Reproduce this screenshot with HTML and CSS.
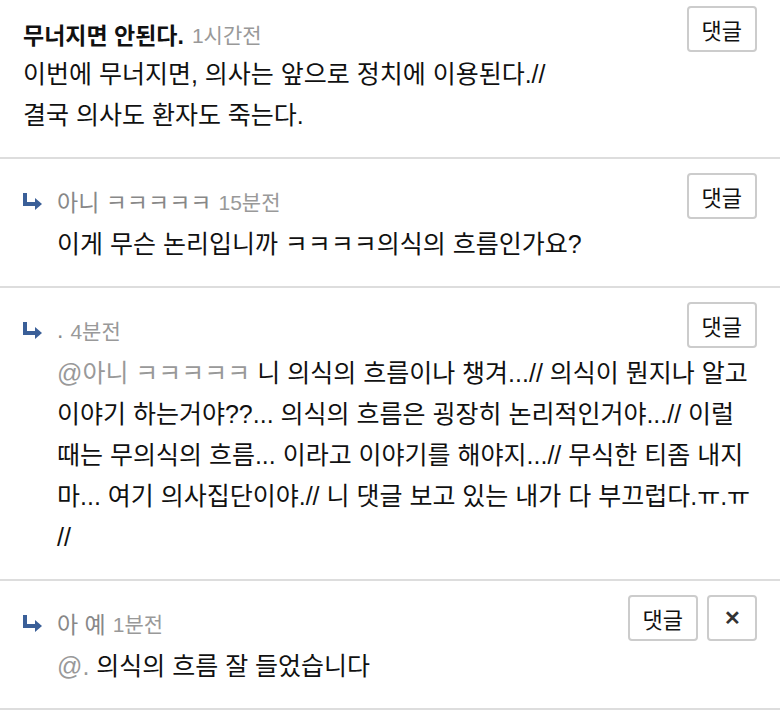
FILE: index.html
```html
<!DOCTYPE html>
<html>
<head>
  <title>댓글</title>
  <link rel="stylesheet" href="styles.css">
</head>
<body>
  <div class="comment-list">
    <div class="comment">
      <div class="comment-head">
        <div class="comment-meta">
          <span class="author-main">무너지면 안된다.</span>
          <span class="time">1시간전</span>
        </div>
        <div class="comment-actions">
          <button class="btn">댓글</button>
        </div>
      </div>
      <div class="comment-body">이번에 무너지면, 의사는 앞으로 정치에 이용된다.//<br>결국 의사도 환자도 죽는다.</div>
    </div>

    <div class="comment reply">
      <div class="comment-head">
        <div class="comment-meta">
          <svg class="reply-icon" width="20" height="18" viewBox="0 0 20 18">
            <path d="M2 1 V12 H13" fill="none" stroke="#3a5f98" stroke-width="4"/>
            <path d="M12 6 L19 12 L12 18 Z" fill="#3a5f98"/>
          </svg>
          <span class="author">아니 ㅋㅋㅋㅋㅋ</span>
          <span class="time">15분전</span>
        </div>
        <div class="comment-actions">
          <button class="btn">댓글</button>
        </div>
      </div>
      <div class="comment-body">이게 무슨 논리입니까 ㅋㅋㅋㅋ의식의 흐름인가요?</div>
    </div>

    <div class="comment reply">
      <div class="comment-head">
        <div class="comment-meta">
          <svg class="reply-icon" width="20" height="18" viewBox="0 0 20 18">
            <path d="M2 1 V12 H13" fill="none" stroke="#3a5f98" stroke-width="4"/>
            <path d="M12 6 L19 12 L12 18 Z" fill="#3a5f98"/>
          </svg>
          <span class="author">.</span>
          <span class="time">4분전</span>
        </div>
        <div class="comment-actions">
          <button class="btn">댓글</button>
        </div>
      </div>
      <div class="comment-body"><span class="mention">@아니 ㅋㅋㅋㅋㅋ</span> 니 의식의 흐름이나 챙겨...// 의식이 뭔지나 알고 이야기 하는거야??... 의식의 흐름은 굉장히 논리적인거야...// 이럴 때는 무의식의 흐름... 이라고 이야기를 해야지...// 무식한 티좀 내지 마... 여기 의사집단이야.// 니 댓글 보고 있는 내가 다 부끄럽다.ㅠ.ㅠ //</div>
    </div>

    <div class="comment reply">
      <div class="comment-head">
        <div class="comment-meta">
          <svg class="reply-icon" width="20" height="18" viewBox="0 0 20 18">
            <path d="M2 1 V12 H13" fill="none" stroke="#3a5f98" stroke-width="4"/>
            <path d="M12 6 L19 12 L12 18 Z" fill="#3a5f98"/>
          </svg>
          <span class="author">아 예</span>
          <span class="time">1분전</span>
        </div>
        <div class="comment-actions">
          <button class="btn">댓글</button>
          <button class="btn btn-close">&#x2715;</button>
        </div>
      </div>
      <div class="comment-body"><span class="mention">@.</span> 의식의 흐름 잘 들었습니다</div>
    </div>
  </div>
</body>
</html>
```

FILE: styles.css
```css
body {
  font-family: "Liberation Sans", "Noto Sans CJK KR", sans-serif;
  background-color: #fff;
  color: #111;
  margin: 0;
  padding: 0;
}

.comment-list {
  margin-top: -8px;
}

.comment {
  padding: 0 23px 21px 23px;
  border-bottom: 2px solid #ddd;
}

.comment-head {
  display: flex;
  justify-content: space-between;
  align-items: flex-start;
  padding-top: 14px;
}

.comment-meta {
  display: flex;
  align-items: center;
  height: 40px;
  margin-top: 8px;
  font-size: 21px;
}

.reply-icon {
  margin-right: 14px;
}

.author-main {
  font-size: 23px;
  font-weight: bold;
  color: #111;
  margin-right: 8px;
}

.author {
  font-size: 23px;
  color: #888;
  margin-right: 7px;
}

.time {
  color: #999;
}

.comment-actions {
  display: flex;
  gap: 9px;
}

.btn {
  font-family: inherit;
  font-size: 22px;
  color: #111;
  background-color: #fff;
  border: 2px solid #ccc;
  border-radius: 4px;
  height: 46px;
  padding: 0 13px;
  cursor: pointer;
}

.btn-close {
  width: 50px;
  padding: 0;
  font-size: 20px;
  font-weight: bold;
  color: #333;
}

.comment-body {
  font-size: 25px;
  line-height: 41px;
  word-break: keep-all;
}

.reply .comment-body {
  margin-top: 3px;
  padding-left: 34px;
}

.mention {
  color: #999;
}
```
